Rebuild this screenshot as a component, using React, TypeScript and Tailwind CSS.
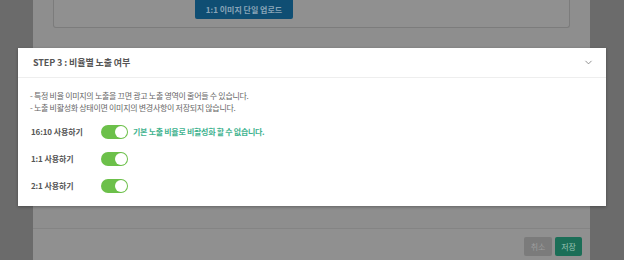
import { ChevronDown } from "lucide-react";

const font = { fontFamily: '"Noto Sans CJK KR", "Noto Sans", sans-serif' };

function Toggle() {
  return (
    <span className="flex h-[14px] w-[27px] items-center justify-end rounded-full bg-[#6cc04a] pr-[1px]">
      <span className="h-[12px] w-[12px] rounded-full bg-white" />
    </span>
  );
}

const rows = [
  { label: "16:10 사용하기", note: "기본 노출 비율로 비활성화 할 수 없습니다." },
  { label: "1:1 사용하기" },
  { label: "2:1 사용하기" },
];

export default function App() {
  return (
    <div className="relative flex h-[260px] w-[624px] overflow-hidden bg-[#6b6b6b]" style={font}>
      <div className="ml-[33px] flex h-full w-[557px] flex-col bg-[#8e8e8e]">
        <div className="mx-[20px] flex h-[28px] justify-start rounded-b-[3px] border-x border-b border-[#7c7c7c] bg-[#909090]">
          <div className="ml-[141px] flex h-[19px] w-[98px] items-center justify-center rounded-b-[2px] bg-[#0f4e73] text-[8px] font-bold text-[#8aa5b8]">
            1:1 이미지 단일 업로드
          </div>
        </div>
        <div className="flex-1" />
        <div className="h-[32px] border-t border-[#848484] bg-[#909090] pt-[8px]">
          <div className="mr-[8px] flex justify-end gap-[3px]">
            <span className="flex h-[19px] w-[28px] items-center justify-center rounded-[2px] bg-[#7b7b7b] text-[8px] text-[#9d9d9d]">
              취소
            </span>
            <span className="flex h-[19px] w-[27px] items-center justify-center rounded-[2px] bg-[#1b6e57] text-[8px] text-[#9cc3b5]">
              저장
            </span>
          </div>
        </div>
      </div>

      <div className="absolute left-[18px] top-[48px] w-[588px] bg-white shadow-[0_1px_3px_rgba(0,0,0,0.3)]">
        <div className="flex h-[30px] items-center justify-between border-b border-[#eeeeee] pl-[15px] pr-[12px]">
          <span className="text-[9px] font-bold tracking-[-0.1px] text-[#555]">STEP 3 : 비율별 노출 여부</span>
          <ChevronDown size={11} strokeWidth={1.75} className="text-[#777]" />
        </div>
        <div className="px-[12px] pb-[13px] pt-[12px]">
          <p className="text-[8px] leading-[12px] tracking-[-0.3px] text-[#666]">
            - 특정 비율 이미지의 노출을 끄면 광고 노출 영역이 줄어들 수 있습니다.
          </p>
          <p className="text-[8px] leading-[12px] tracking-[-0.3px] text-[#666]">
            - 노출 비활성화 상태이면 이미지의 변경사항이 저장되지 않습니다.
          </p>
          <div className="mt-[11px] flex flex-col gap-[13px]">
            {rows.map((r) => (
              <div key={r.label} className="flex h-[14px] items-center">
                <span className="w-[71px] pl-[1px] text-[8px] font-bold tracking-[-0.1px] text-[#555]">{r.label}</span>
                <Toggle />
                {r.note && (
                  <span className="ml-[5px] text-[8px] font-bold tracking-[-0.3px] text-[#3fb38f]">{r.note}</span>
                )}
              </div>
            ))}
          </div>
        </div>
      </div>
    </div>
  );
}
